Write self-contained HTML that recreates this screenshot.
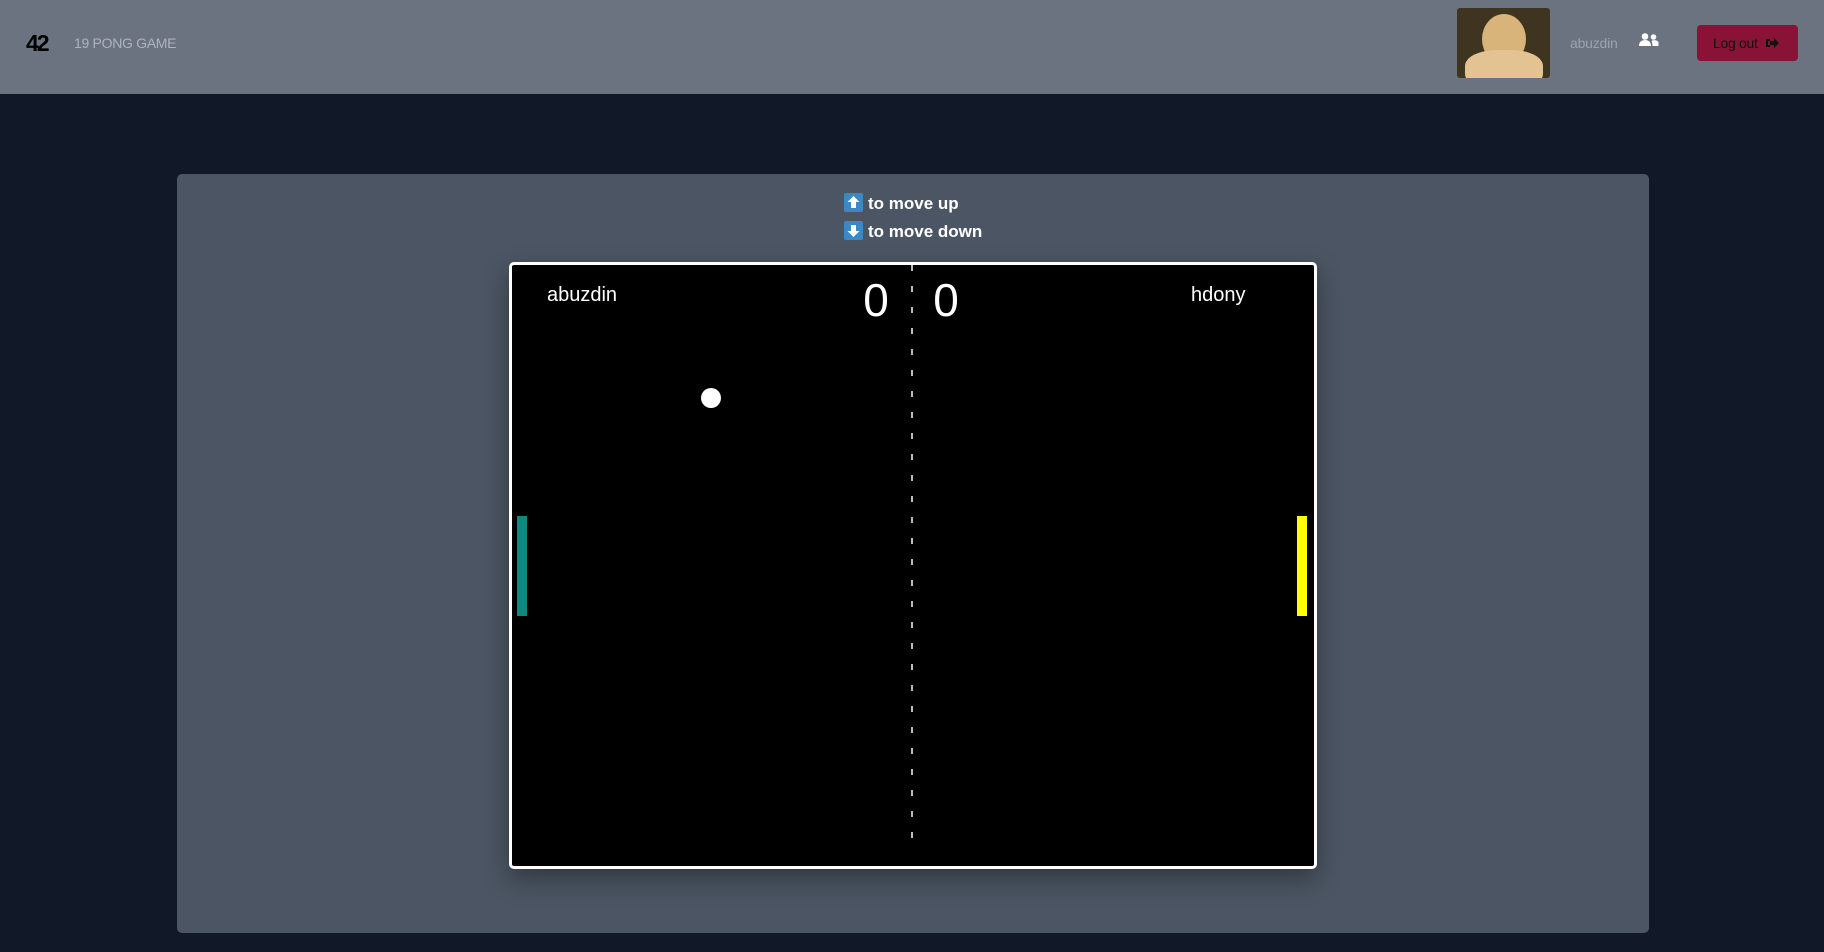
<!DOCTYPE html>
<html><head><meta charset="utf-8"><style>
*{margin:0;padding:0;box-sizing:border-box}
html,body{width:1824px;height:952px;overflow:hidden;background:#111827;font-family:"Liberation Sans",sans-serif}
.hdr{position:absolute;left:0;top:0;width:1824px;height:94px;background:#6b7280}
.logo{position:absolute;left:26px;top:30px;font:900 23px "Liberation Sans",sans-serif;color:#000;letter-spacing:-2px}
.title{position:absolute;left:74px;top:35px;font-size:14px;color:#aeb4bd;letter-spacing:-0.3px}
.avatar{position:absolute;left:1457px;top:8px;width:93px;height:70px;border-radius:3px;overflow:hidden;background:#3f3420}
.uname{position:absolute;left:1570px;top:35px;font-size:14px;color:#9ca3af;letter-spacing:-0.2px}
.friends{position:absolute;left:1639px;top:33px}
.logout{position:absolute;left:1697px;top:25px;width:101px;height:36px;background:#881337;border-radius:4px;font-size:14px;color:#111;padding:10px 0 0 16px;letter-spacing:-0.3px}
.panel{position:absolute;left:177px;top:174px;width:1472px;height:759px;background:#4b5563;border-radius:5px}
.ins{position:absolute;left:844px;font:bold 17px "Liberation Sans",sans-serif;color:#fff}
.ins span{display:inline-block;width:19px;height:19px;background:#3b88c3;border-radius:2px;vertical-align:-3px;margin-right:5px;position:relative}
.cv{position:absolute;left:509px;top:262px;width:808px;height:607px;border:3px solid #fff;border-radius:5px;background:#000;box-shadow:0 10px 25px rgba(0,0,0,.35);overflow:hidden}
</style></head><body>
<div class="hdr">
<div class="logo">42</div>
<div class="title">19 PONG GAME</div>
<div class="avatar"><div style="position:absolute;left:25px;top:6px;width:44px;height:50px;border-radius:50%;background:#d8b37a"></div><div style="position:absolute;left:8px;top:42px;width:78px;height:40px;border-radius:40%;background:#e2c391"></div></div>
<div class="uname">abuzdin</div>
<svg class="friends" width="20" height="14" viewBox="0 0 20 14"><circle cx="6" cy="3.5" r="3.3" fill="#fff"/><path d="M0 13c0-4 2.5-6 6-6s6 2 6 6z" fill="#fff"/><circle cx="14.5" cy="4" r="2.8" fill="#fff"/><path d="M12.5 8c1-1 5-1.5 7 1v4h-6c0-2-.3-3.5-1-5z" fill="#fff"/></svg>
<div class="logout">Log out <svg width="14" height="12" viewBox="0 0 14 12" style="vertical-align:-1px;margin-left:4px"><path d="M1 2h4v2H3v4h2v2H1z" fill="#111"/><path d="M5 4h4V1l5 5-5 5V8H5z" fill="#111"/></svg></div>
</div>
<div class="panel"></div>
<div class="ins" style="top:193px"><span><svg width="19" height="19" viewBox="0 0 19 19"><path d="M9.5 3l6 6h-3.5v6h-5v-6H3.5z" fill="#fff"/></svg></span>to move up</div>
<div class="ins" style="top:221px"><span><svg width="19" height="19" viewBox="0 0 19 19"><path d="M9.5 16l6-6h-3.5V4h-5v6H3.5z" fill="#fff"/></svg></span>to move down</div>
<div class="cv">
<svg width="802" height="601" viewBox="513 265 802 601" style="display:block">
<line x1="913" y1="265" x2="913" y2="851" stroke="#bbb" stroke-width="2" stroke-dasharray="6 15"/>
<text x="548" y="301" fill="#fff" font-family="Liberation Sans" font-size="20">abuzdin</text>
<text x="1192" y="301" fill="#fff" font-family="Liberation Sans" font-size="20">hdony</text>
<text x="877" y="316" fill="#fff" font-family="Liberation Sans" font-size="46" text-anchor="middle">0</text>
<text x="947" y="316" fill="#fff" font-family="Liberation Sans" font-size="46" text-anchor="middle">0</text>
<circle cx="712" cy="398" r="10" fill="#fff"/>
<rect x="518" y="516" width="10" height="100" fill="#0d8a80"/>
<rect x="1298" y="516" width="10" height="100" fill="#ffff00"/>
</svg>
</div>
</body></html>
